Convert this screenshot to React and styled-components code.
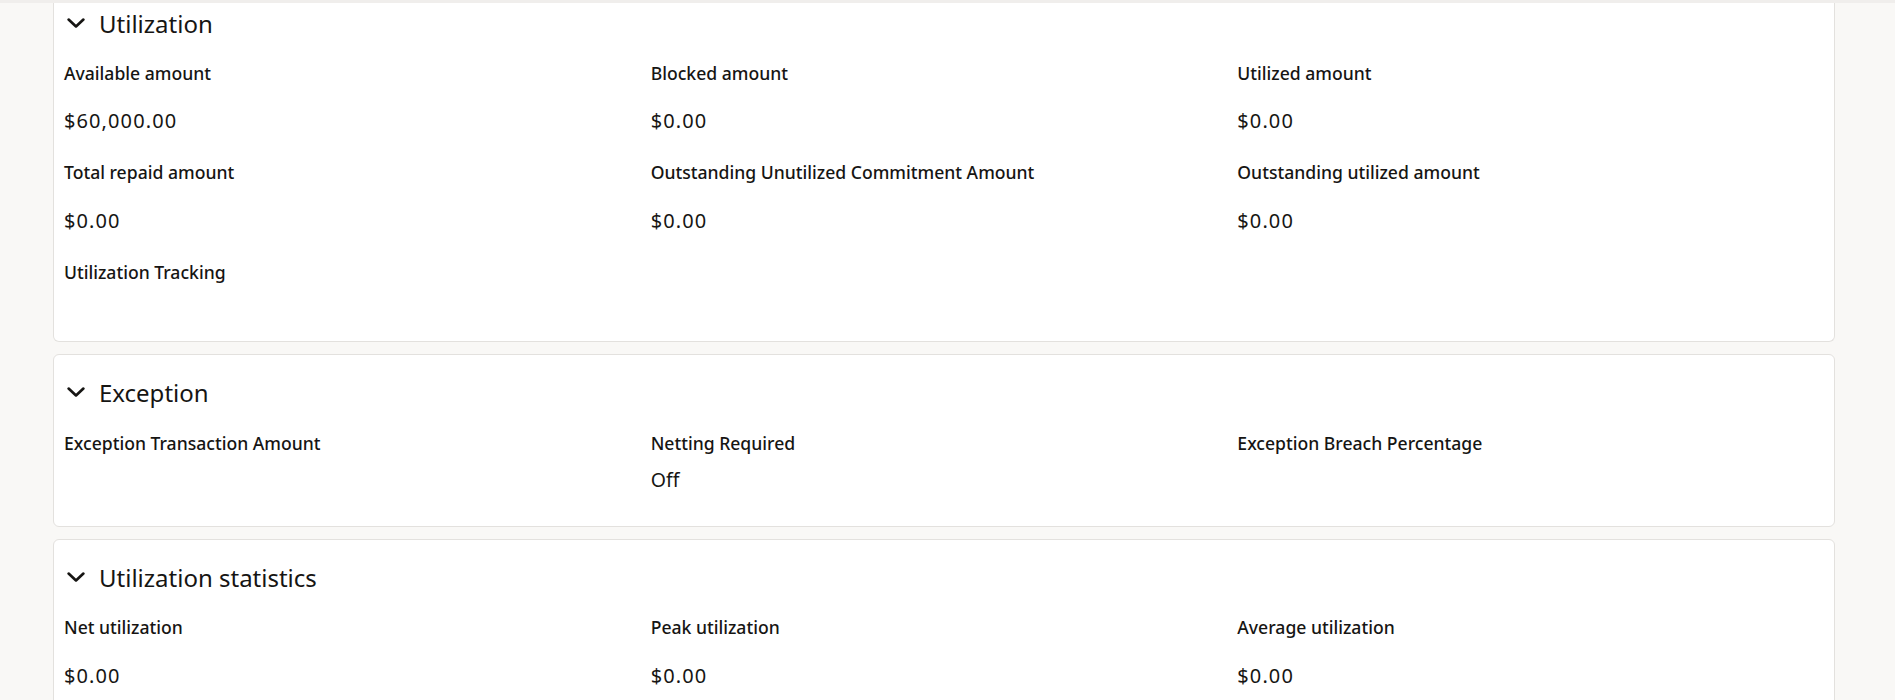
import React from "react";
import styled, { createGlobalStyle } from "styled-components";

const GlobalStyle = createGlobalStyle`
  html, body {
    margin: 0;
    padding: 0;
    background: #f9f8f6;
    color: #161513;
    font-family: "Noto Sans", "Open Sans", Arial, sans-serif;
  }
  * { box-sizing: border-box; }
`;

const TopEdge = styled.div`
  position: fixed;
  top: 0;
  left: 0;
  right: 0;
  height: 3px;
  background: #f0eeec;
  z-index: 5;
`;

const Page = styled.main`
  display: flex;
  flex-direction: column;
  gap: 12px;
  padding: 0 60px 40px 53px;
`;

const Card = styled.section`
  background: #ffffff;
  border: 1px solid #e3e1de;
  border-radius: 6px;
  padding: 22px 10px 33.5px;
  ${(p) =>
    p.$continued &&
    `
    border-top: none;
    border-top-left-radius: 0;
    border-top-right-radius: 0;
    padding-top: 8px;
  `}
`;

const Header = styled.button`
  display: flex;
  align-items: center;
  gap: 11px;
  height: 32px;
  margin: 0 0 ${(p) => (p.$continued ? "22.5px" : "23.5px")};
  padding: 0;
  border: none;
  background: none;
  color: inherit;
  font: inherit;
  cursor: pointer;
`;

const Chevron = styled.svg`
  width: 24px;
  height: 24px;
  flex: none;
`;

const Title = styled.h2`
  margin: 0;
  font-size: 24px;
  line-height: 32px;
  font-weight: 400;
  color: #161513;
`;

const Grid = styled.div`
  display: grid;
  grid-template-columns: repeat(3, 1fr);
  row-gap: 29.5px;
`;

const Field = styled.div`
  display: flex;
  flex-direction: column;
  min-width: 0;
`;

const Label = styled.div`
  font-size: 17.6px;
  line-height: 20px;
  font-weight: 500;
  color: #161513;
  white-space: nowrap;
`;

const Value = styled.div`
  margin-top: ${(p) => (p.$compact ? "15.75px" : "26.25px")};
  font-size: ${(p) => (p.$numeric ? "20px" : "19.5px")};
  letter-spacing: ${(p) => (p.$numeric ? "1.1px" : "0")};
  line-height: 24px;
  font-weight: 400;
  color: #161513;
`;

const TrackingArea = styled.div`
  height: 25.5px;
`;

const ChevronIcon = () => (
  <Chevron viewBox="0 0 24 24" fill="none" aria-hidden="true">
    <path
      d="M4.6 7.6 L12 14.4 L19.4 7.6"
      stroke="#161513"
      strokeWidth="2.7"
      strokeLinecap="round"
      strokeLinejoin="round"
    />
  </Chevron>
);

const Section = ({ title, continued, children }) => (
  <Card $continued={continued}>
    <Header type="button" $continued={continued}>
      <ChevronIcon />
      <Title>{title}</Title>
    </Header>
    <Grid>{children}</Grid>
  </Card>
);

const Item = ({ label, value, compact, children }) => (
  <Field>
    <Label>{label}</Label>
    {value !== undefined && (
      <Value $compact={compact} $numeric={value.startsWith("$")}>
        {value}
      </Value>
    )}
    {children}
  </Field>
);

export default function App() {
  return (
    <>
      <GlobalStyle />
      <TopEdge />
      <Page>
        <Section title="Utilization" continued>
          <Item label="Available amount" value="$60,000.00" />
          <Item label="Blocked amount" value="$0.00" />
          <Item label="Utilized amount" value="$0.00" />
          <Item label="Total repaid amount" value="$0.00" />
          <Item label="Outstanding Unutilized Commitment Amount" value="$0.00" />
          <Item label="Outstanding utilized amount" value="$0.00" />
          <Item label="Utilization Tracking">
            <TrackingArea />
          </Item>
        </Section>
        <Section title="Exception">
          <Item label="Exception Transaction Amount" />
          <Item label="Netting Required" value="Off" compact />
          <Item label="Exception Breach Percentage" />
        </Section>
        <Section title="Utilization statistics">
          <Item label="Net utilization" value="$0.00" />
          <Item label="Peak utilization" value="$0.00" />
          <Item label="Average utilization" value="$0.00" />
        </Section>
      </Page>
    </>
  );
}
